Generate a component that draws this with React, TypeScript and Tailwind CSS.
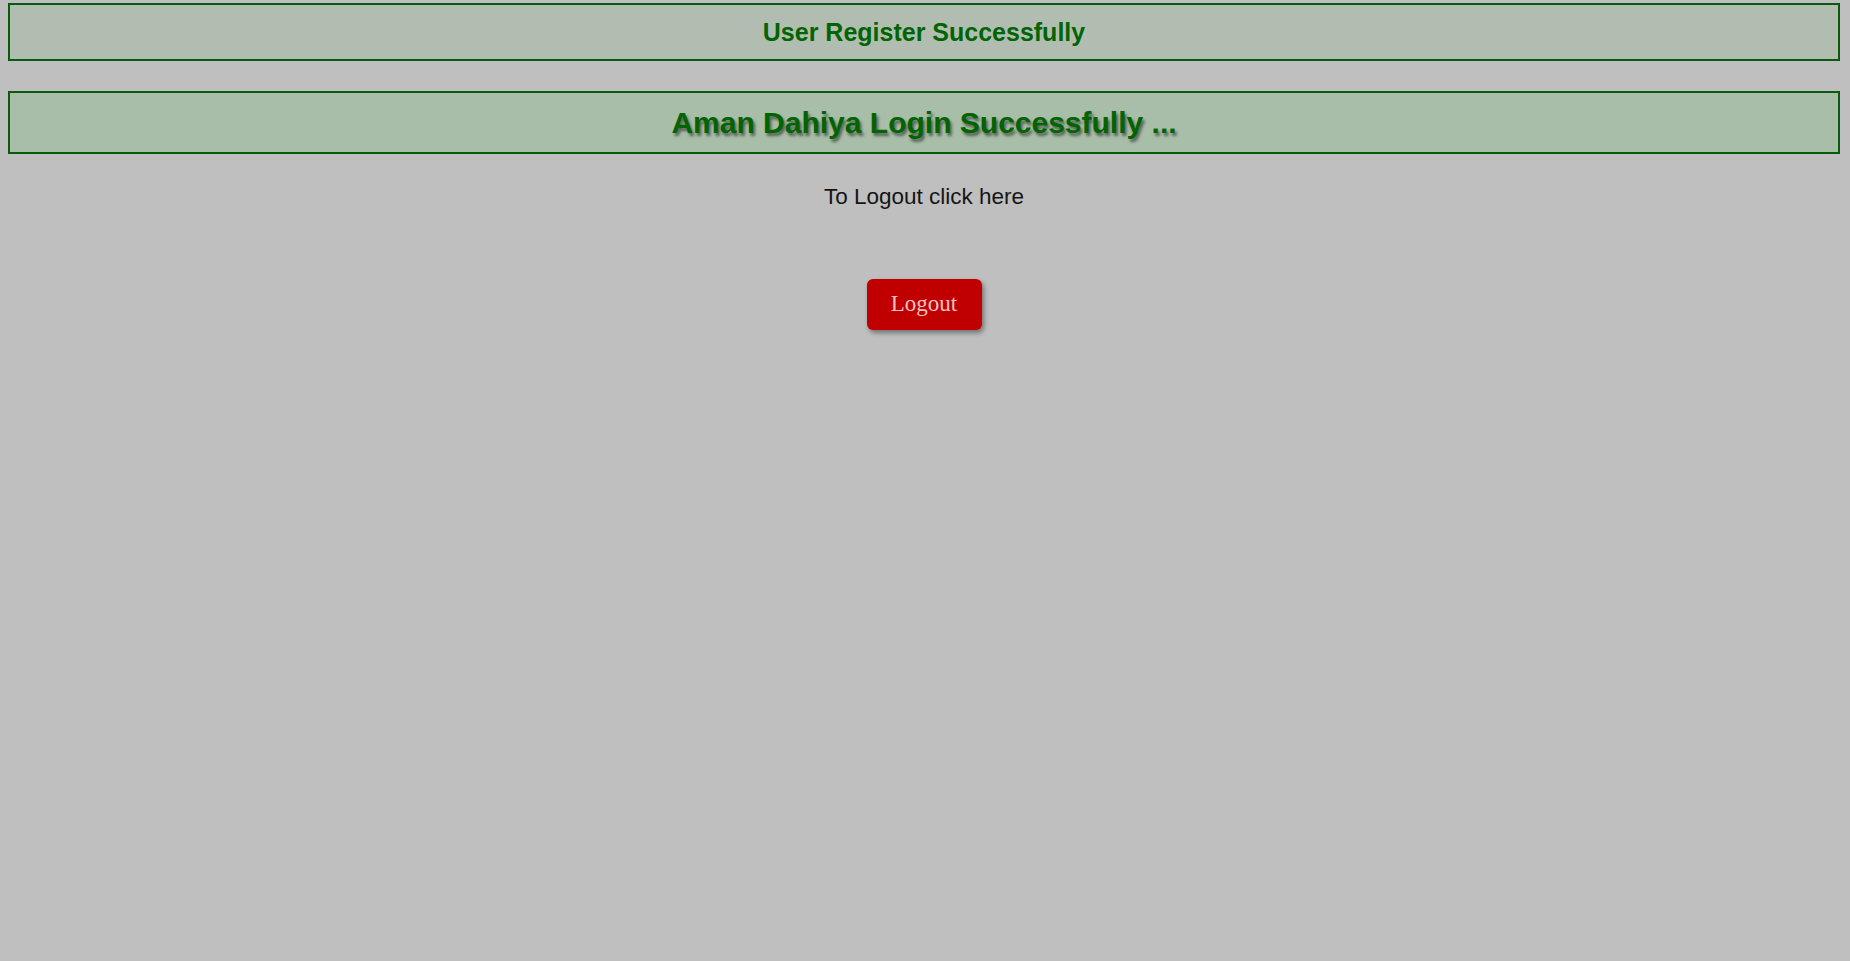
const App = () => {
    return (
        <div className="min-h-screen bg-[#bfbfbf] pt-[3px] font-['Liberation_Sans',Arial,sans-serif]">

            {/* Register message */}
            <div className="ml-2 mr-[10px] h-[58px] pt-[2px] border-2 border-[#0b5a0b] bg-[#b2bdb2] flex items-center justify-center">
                <h2 className="text-[25px] font-bold text-[#006400]">User Register Successfully</h2>
            </div>

            {/* Login message */}
            <div className="ml-2 mr-[10px] mt-[30px] h-[63px] border-2 border-[#0b5a0b] bg-[#a9bea9] flex items-center justify-center">
                <h1 className="text-[30px] font-bold text-[#006400] [text-shadow:2px_3px_3px_rgba(0,0,0,0.5)]">Aman Dahiya Login Successfully ...</h1>
            </div>

            {/* Logout */}
            <div className="flex flex-col items-center pr-[2px]">
                <p className="mt-[26px] text-[22.5px] text-[#151515]">To Logout click here</p>
                <button className="mt-[65px] w-[115px] h-[51px] rounded-[6px] bg-[#c00000] text-[#f2c2c2] text-[23px] font-['Liberation_Serif','Times_New_Roman',serif] shadow-[2px_3px_5px_rgba(0,0,0,0.4)]">
                    Logout
                </button>
            </div>

        </div>
    );
};

export default App;
